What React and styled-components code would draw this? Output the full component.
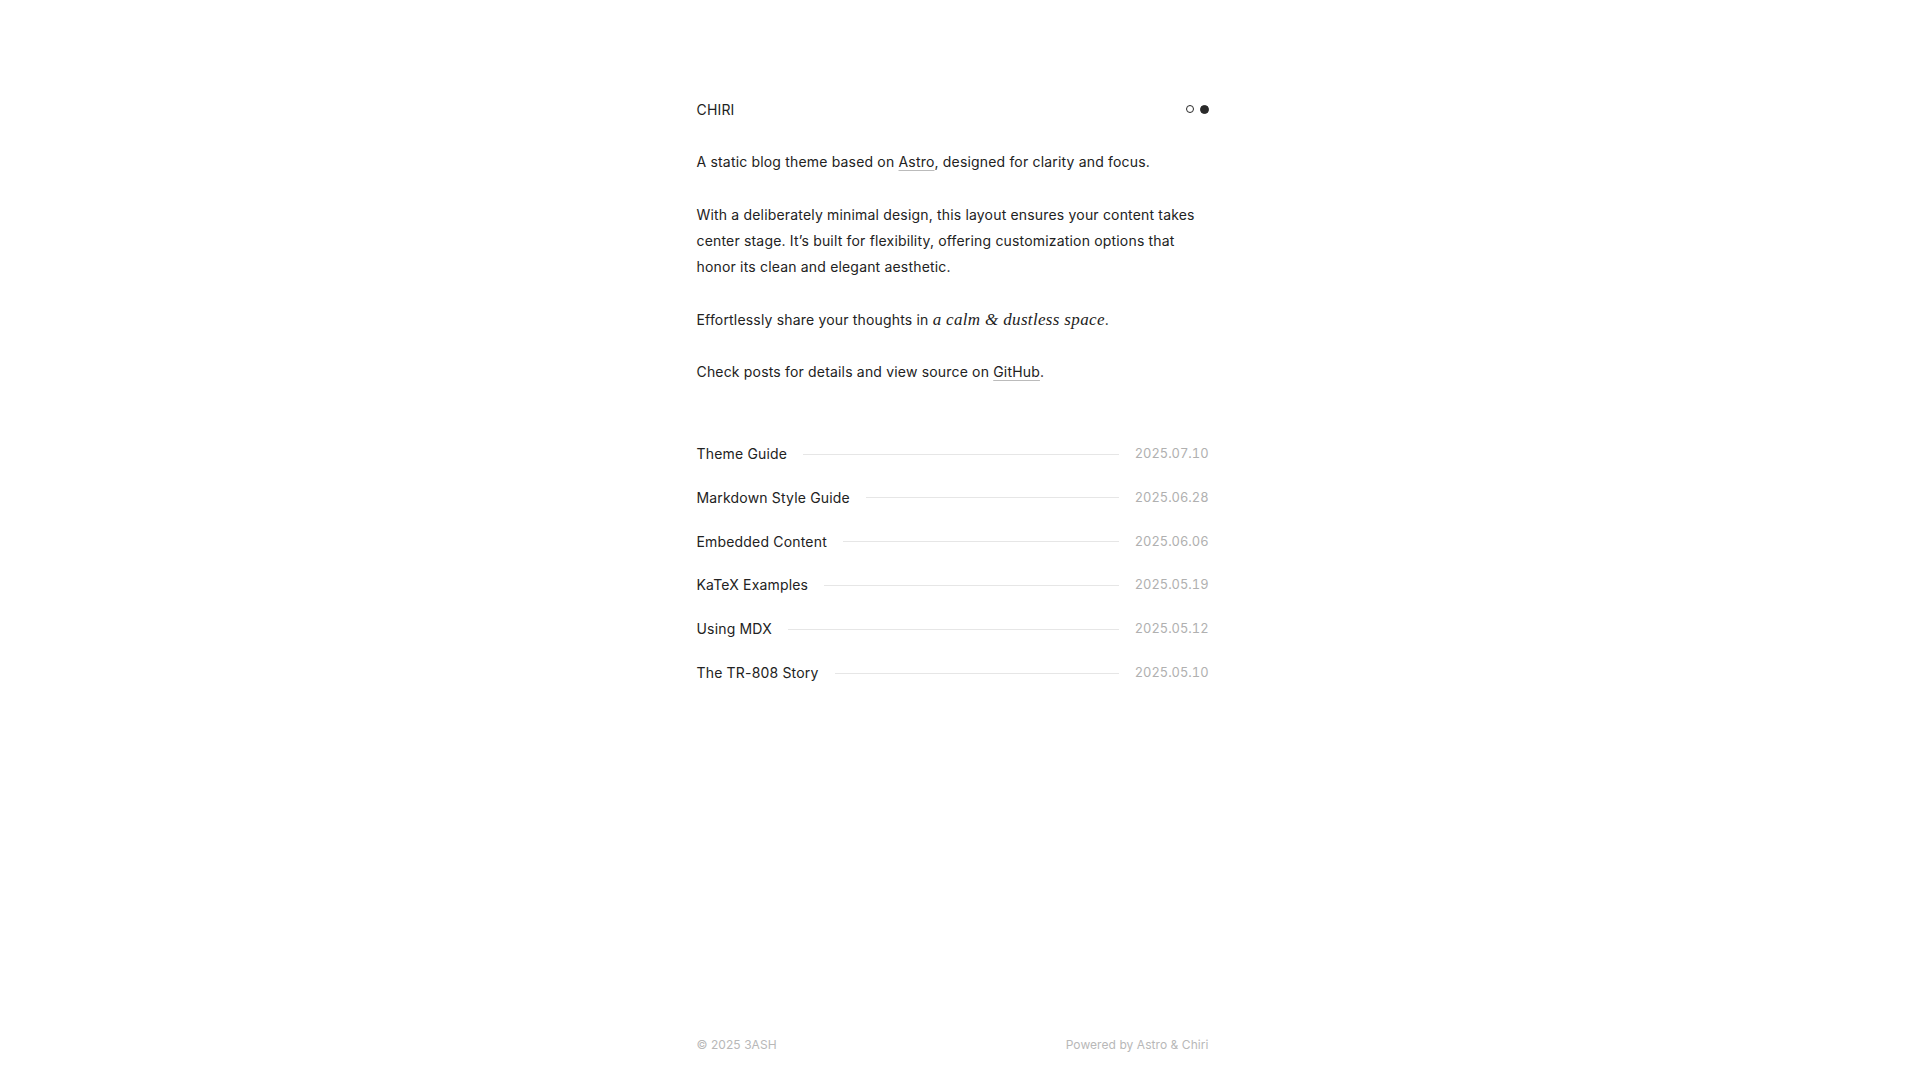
import React from "react";
import styled, { createGlobalStyle } from "styled-components";

const GlobalStyle = createGlobalStyle`
  html, body {
    margin: 0;
    padding: 0;
    background: #fff;
  }
  body {
    font-family: Inter, "Noto Sans", sans-serif;
    color: #222;
    -webkit-font-smoothing: antialiased;
  }
  a {
    color: inherit;
    text-decoration: none;
  }
`;

const posts = [
  { title: "Theme Guide", date: "2025.07.10" },
  { title: "Markdown Style Guide", date: "2025.06.28" },
  { title: "Embedded Content", date: "2025.06.06" },
  { title: "KaTeX Examples", date: "2025.05.19" },
  { title: "Using MDX", date: "2025.05.12" },
  { title: "The TR-808 Story", date: "2025.05.10" },
];

const Page = styled.div`
  min-height: 100vh;
  display: flex;
  flex-direction: column;
  box-sizing: border-box;
  padding-right: 15px;
`;

const Column = styled.div`
  width: 512px;
  margin: 0 auto;
  flex: 1;
  display: flex;
  flex-direction: column;
  letter-spacing: 0.011em;
`;

const Header = styled.header`
  display: flex;
  align-items: center;
  justify-content: space-between;
  padding-top: 96px;
  height: 26px;
`;

const Logo = styled.a`
  font-size: 14px;
`;

const Toggles = styled.div`
  display: flex;
  align-items: center;
  gap: 6px;
`;

const Dot = styled.span`
  width: ${(p) => (p.$filled ? 9 : 8)}px;
  height: ${(p) => (p.$filled ? 9 : 8)}px;
  border-radius: 50%;
  box-sizing: border-box;
  border: 1.5px solid #2a2a2a;
  background: ${(p) => (p.$filled ? "#2a2a2a" : "transparent")};
`;

const Intro = styled.main`
  margin-top: 27px;
  font-size: 14px;
  line-height: 26.3px;
`;

const Para = styled.p`
  margin: 0 0 26.3px;
`;

const Link = styled.a`
  text-decoration: underline;
  text-decoration-color: #bbb;
  text-decoration-thickness: 1px;
  text-underline-offset: 3px;
`;

const Math = styled.span`
  font-family: "Liberation Serif", "DejaVu Serif", serif;
  font-style: italic;
  font-size: 17px;
  letter-spacing: 0.02em;
`;

const PostList = styled.ul`
  list-style: none;
  margin: 29px 0 0;
  padding: 0;
  display: flex;
  flex-direction: column;
  gap: 17.4px;
`;

const PostRow = styled.li`
  display: flex;
  align-items: center;
  font-size: 14px;
  line-height: 26.4px;
`;

const Rule = styled.span`
  flex: 1;
  height: 1px;
  background: #e6e6e6;
  margin: 0 16px;
`;

const PostDate = styled.span`
  color: #b0b0b0;
  font-size: 12.9px;
  letter-spacing: 0;
  font-variant-numeric: tabular-nums;
`;

const Footer = styled.footer`
  margin-top: auto;
  display: flex;
  justify-content: space-between;
  font-size: 12px;
  letter-spacing: 0.005em;
  color: #b8b8b8;
  padding: 0 0 25px;
  line-height: 20px;
`;

export default function App() {
  return (
    <>
      <GlobalStyle />
      <Page>
        <Column>
          <Header>
            <Logo href="#">CHIRI</Logo>
            <Toggles>
              <Dot />
              <Dot $filled />
            </Toggles>
          </Header>
          <Intro>
            <Para>
              A static blog theme based on <Link href="#">Astro</Link>, designed for clarity and focus.
            </Para>
            <Para>
              With a deliberately minimal design, this layout ensures your content takes center stage.
              It’s built for flexibility, offering customization options that honor its clean and
              elegant aesthetic.
            </Para>
            <Para>
              Effortlessly share your thoughts in <Math>a calm &amp; dustless space</Math>.
            </Para>
            <Para>
              Check posts for details and view source on <Link href="#">GitHub</Link>.
            </Para>
          </Intro>
          <PostList>
            {posts.map((p) => (
              <PostRow key={p.title}>
                <a href="#">{p.title}</a>
                <Rule />
                <PostDate>{p.date}</PostDate>
              </PostRow>
            ))}
          </PostList>
          <Footer>
            <span>© 2025 3ASH</span>
            <span>Powered by Astro &amp; Chiri</span>
          </Footer>
        </Column>
      </Page>
    </>
  );
}
